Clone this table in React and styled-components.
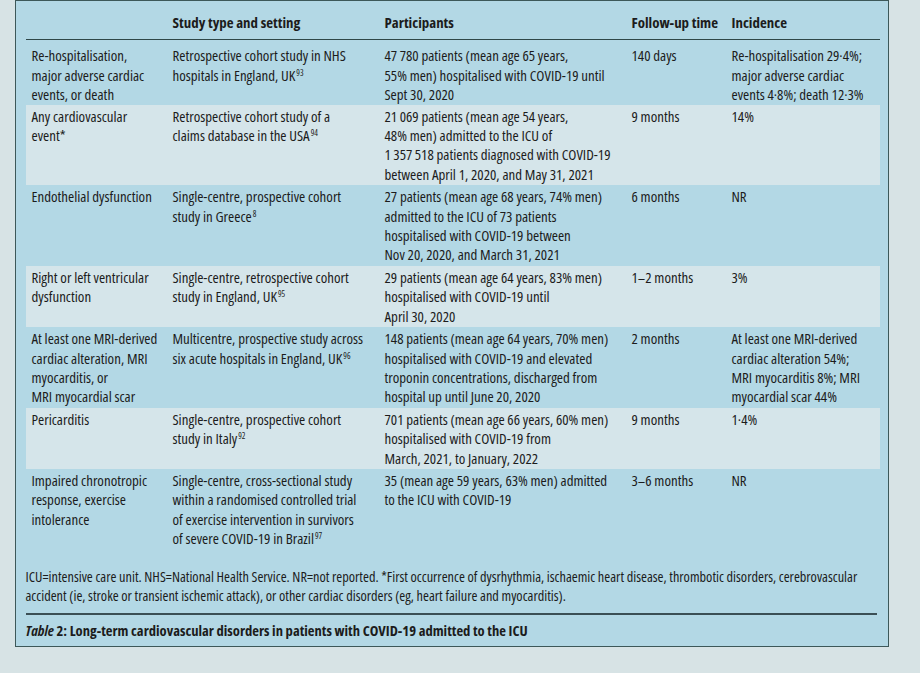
import React from "react";
import styled, { createGlobalStyle } from "styled-components";

const GlobalStyle = createGlobalStyle`
  html, body {
    margin: 0;
    padding: 0;
    background: #d7e3e5;
  }
  body {
    font-family: "Open Sans", "Liberation Sans", Arial, sans-serif;
    font-stretch: 75%;
    color: #1c1c1c;
  }
`;

const Page = styled.div`
  width: 920px;
  height: 673px;
  background: #d7e3e5;
  overflow: hidden;
`;

const Panel = styled.div`
  box-sizing: border-box;
  width: 874px;
  margin-left: 15px;
  background: #b3d8e5;
  border: 1.5px solid #3d5859;
  padding: 0 9px 0 9.5px;
`;

const Table = styled.table`
  width: 100%;
  border-collapse: collapse;
  table-layout: fixed;
  font-size: 14.9px;
  line-height: 19.4px;
`;

const Col = styled.col`
  width: ${(p) => p.$w}px;
`;

const HeadCell = styled.th`
  text-align: left;
  font-weight: 700;
  padding: 12px 0 7px 6px;
  border-bottom: 1.5px solid #2f4748;
  white-space: nowrap;
`;

const Row = styled.tr`
  background: ${(p) => (p.$shaded ? "#d5e5ea" : "transparent")};
`;

const Cell = styled.td`
  vertical-align: top;
  white-space: nowrap;
  padding: ${(p) => (p.$first ? "6px" : "2px")} 0 ${(p) => (p.$first ? "0" : "1px")} 6px;
`;

const Sup = styled.sup`
  font-size: 8.5px;
  line-height: 0;
  vertical-align: 5px;
  margin-left: 1px;
`;

const Footnote = styled.p`
  margin: 17px 0 0 0;
  font-size: 14.3px;
  line-height: 19px;
  white-space: nowrap;
`;

const Rule = styled.div`
  margin: 8px 2px 0 0;
  height: 2px;
  background: #3b4f55;
`;

const Caption = styled.p`
  margin: 0;
  padding: 6px 0 6px 0;
  font-size: 14.6px;
  line-height: 19px;
  font-weight: 700;
`;

const columns = [
  { title: "", width: 141 },
  { title: "Study type and setting", width: 212 },
  { title: "Participants", width: 247 },
  { title: "Follow-up time", width: 100 },
  { title: "Incidence", width: 154 },
];

const rows = [
  [
    ["Re-hospitalisation,", "major adverse cardiac", "events, or death"],
    ["Retrospective cohort study in NHS", "hospitals in England, UK^93"],
    ["47\u2009780 patients (mean age 65 years,", "55% men) hospitalised with COVID-19 until", "Sept 30, 2020"],
    ["140 days"],
    ["Re-hospitalisation 29·4%;", "major adverse cardiac", "events 4·8%; death 12·3%"],
  ],
  [
    ["Any cardiovascular", "event*"],
    ["Retrospective cohort study of a", "claims database in the USA^94"],
    ["21\u2009069 patients (mean age 54 years,", "48% men) admitted to the ICU of", "1\u2009357\u2009518 patients diagnosed with COVID-19", "between April 1, 2020, and May 31, 2021"],
    ["9 months"],
    ["14%"],
  ],
  [
    ["Endothelial dysfunction"],
    ["Single-centre, prospective cohort", "study in Greece^8"],
    ["27 patients (mean age 68 years, 74% men)", "admitted to the ICU of 73 patients", "hospitalised with COVID-19 between", "Nov 20, 2020, and March 31, 2021"],
    ["6 months"],
    ["NR"],
  ],
  [
    ["Right or left ventricular", "dysfunction"],
    ["Single-centre, retrospective cohort", "study in England, UK^95"],
    ["29 patients (mean age 64 years, 83% men)", "hospitalised with COVID-19 until", "April 30, 2020"],
    ["1–2 months"],
    ["3%"],
  ],
  [
    ["At least one MRI-derived", "cardiac alteration, MRI", "myocarditis, or", "MRI myocardial scar"],
    ["Multicentre, prospective study across", "six acute hospitals in England, UK^96"],
    ["148 patients (mean age 64 years, 70% men)", "hospitalised with COVID-19 and elevated", "troponin concentrations, discharged from", "hospital up until June 20, 2020"],
    ["2 months"],
    ["At least one MRI-derived", "cardiac alteration 54%;", "MRI myocarditis 8%; MRI", "myocardial scar 44%"],
  ],
  [
    ["Pericarditis"],
    ["Single-centre, prospective cohort", "study in Italy^92"],
    ["701 patients (mean age 66 years, 60% men)", "hospitalised with COVID-19 from", "March, 2021, to January, 2022"],
    ["9 months"],
    ["1·4%"],
  ],
  [
    ["Impaired chronotropic", "response, exercise", "intolerance"],
    ["Single-centre, cross-sectional study", "within a randomised controlled trial", "of exercise intervention in survivors", "of severe COVID-19 in Brazil^97"],
    ["35 (mean age 59 years, 63% men) admitted", "to the ICU with COVID-19"],
    ["3–6 months"],
    ["NR"],
  ],
];

// "text^93" -> text with a superscript reference
const Line = ({ text }) => {
  const [main, ref] = text.split("^");
  return (
    <>
      {main}
      {ref && <Sup>{ref}</Sup>}
    </>
  );
};

const CellLines = ({ lines }) =>
  lines.map((l, i) => (
    <React.Fragment key={i}>
      {i > 0 && <br />}
      <Line text={l} />
    </React.Fragment>
  ));

const App = () => {
  return (
    <Page>
      <GlobalStyle />
      <Panel>
        <Table>
          <colgroup>
            {columns.map((c, i) => (
              <Col key={i} $w={c.width} />
            ))}
          </colgroup>
          <thead>
            <tr>
              {columns.map((c, i) => (
                <HeadCell key={i}>{c.title}</HeadCell>
              ))}
            </tr>
          </thead>
          <tbody>
            {rows.map((r, i) => (
              <Row key={i} $shaded={i % 2 === 1}>
                {r.map((lines, j) => (
                  <Cell key={j} $first={i === 0}>
                    <CellLines lines={lines} />
                  </Cell>
                ))}
              </Row>
            ))}
          </tbody>
        </Table>
        <Footnote>
          ICU=intensive care unit. NHS=National Health Service. NR=not reported. *First occurrence of dysrhythmia, ischaemic heart disease, thrombotic disorders, cerebrovascular
          <br />
          accident (ie, stroke or transient ischemic attack), or other cardiac disorders (eg, heart failure and myocarditis).
        </Footnote>
        <Rule />
        <Caption>
          <i>Table</i> 2: Long-term cardiovascular disorders in patients with COVID-19 admitted to the ICU
        </Caption>
      </Panel>
    </Page>
  );
};

export default App;
